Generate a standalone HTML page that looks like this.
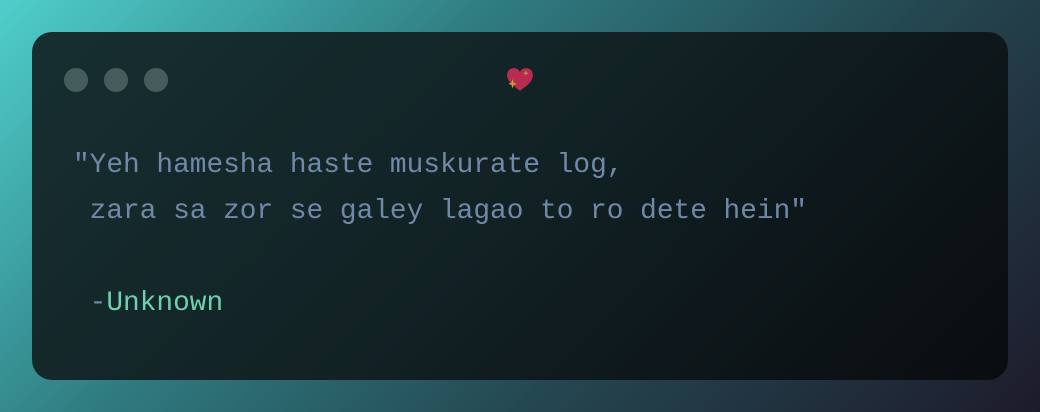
<!DOCTYPE html>
<html><head><meta charset="utf-8"><style>
html,body{margin:0;padding:0;}
body{width:1040px;height:412px;overflow:hidden;background:linear-gradient(135deg,#4fcfcb 0%,#2f7b80 35%,#244650 65%,#1d1b2b 100%);position:relative;font-family:"Liberation Mono",monospace;}
.card{position:absolute;left:32px;top:32px;width:976px;height:348px;border-radius:20px;background:linear-gradient(135deg,#172f31 0%,#112124 50%,#0a0c10 100%);}
.dot{position:absolute;top:36px;width:24px;height:24px;border-radius:50%;background:#465d5d;}
.heart{position:absolute;left:474px;top:34px;}
.txt{position:absolute;left:41px;top:111px;font-size:27.8px;line-height:46px;color:#7189a8;white-space:pre;}
.u{color:#6fcfae;}
</style></head><body>
<div class="card">
<div class="dot" style="left:32px"></div>
<div class="dot" style="left:72px"></div>
<div class="dot" style="left:112px"></div>
<svg class="heart" width="28" height="28" viewBox="0 0 26 26">
<path d="M13 23 C6 18 1 14 1 8.5 C1 4.5 4 2 7.5 2 C10 2 12 3.5 13 5.5 C14 3.5 16 2 18.5 2 C22 2 25 4.5 25 8.5 C25 14 20 18 13 23Z" fill="#b82d4f"/>
<path d="M6 12 L7 15.5 L10 16.5 L7 17.5 L6 21 L5 17.5 L2 16.5 L5 15.5Z" fill="#c9a22f"/>
<path d="M18.5 4 L19.1 6 L21 6.6 L19.1 7.2 L18.5 9 L17.9 7.2 L16 6.6 L17.9 6Z" fill="#c9a22f"/>
</svg>
<div class="txt">"Yeh hamesha haste muskurate log,
 zara sa zor se galey lagao to ro dete hein"

 -<span class="u">Unknown</span></div>
</div>
</body></html>
